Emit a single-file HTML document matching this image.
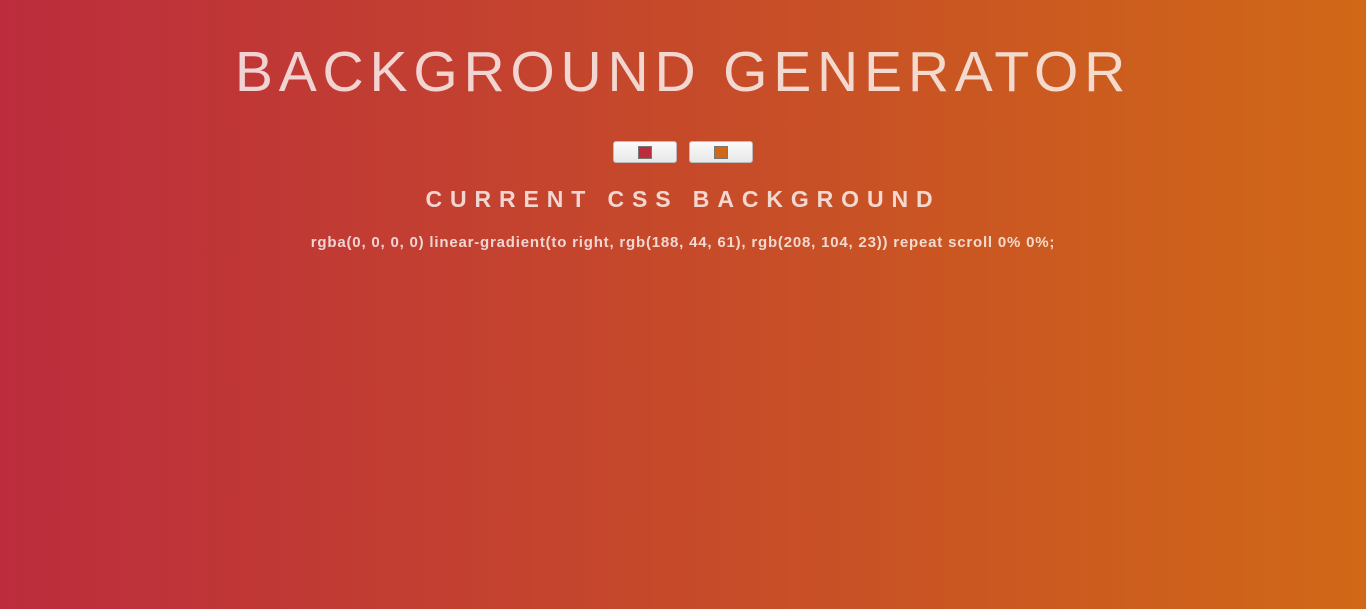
<!DOCTYPE html>
<html><head><style>
html,body{margin:0;height:609px;overflow:hidden}
body{background:linear-gradient(to right,rgb(188,44,61),rgb(208,104,23));font-family:"Liberation Sans",sans-serif;color:rgba(255,255,255,0.78);text-align:center}
h1{margin:0;position:absolute;top:36px;left:0;right:0;font-size:57px;font-weight:normal;letter-spacing:5.8px;line-height:72px}
.inputs{position:absolute;top:141px;left:0;right:0;text-align:center;font-size:0}
.ci{display:inline-block;width:62px;height:20px;margin:0 6px;border:1px solid #bbb;border-radius:3px;background:linear-gradient(#fafafa,#e8e8e8);position:relative}
.ci i{position:absolute;left:24px;top:4px;width:12px;height:11px;border:1px solid #777}
h3{margin:0;position:absolute;top:184px;left:0;right:0;font-size:23px;letter-spacing:7.9px;line-height:30px}
p{margin:0;position:absolute;top:234px;left:0;right:0;font-size:15px;font-weight:bold;line-height:18px;letter-spacing:0.8px}
</style></head><body>
<h1>BACKGROUND GENERATOR</h1>
<div class="inputs"><span class="ci"><i style="background:rgb(188,44,61)"></i></span><span class="ci"><i style="background:rgb(208,104,23)"></i></span></div>
<h3>CURRENT CSS BACKGROUND</h3>
<p>rgba(0, 0, 0, 0) linear-gradient(to right, rgb(188, 44, 61), rgb(208, 104, 23)) repeat scroll 0% 0%;</p>
</body></html>
